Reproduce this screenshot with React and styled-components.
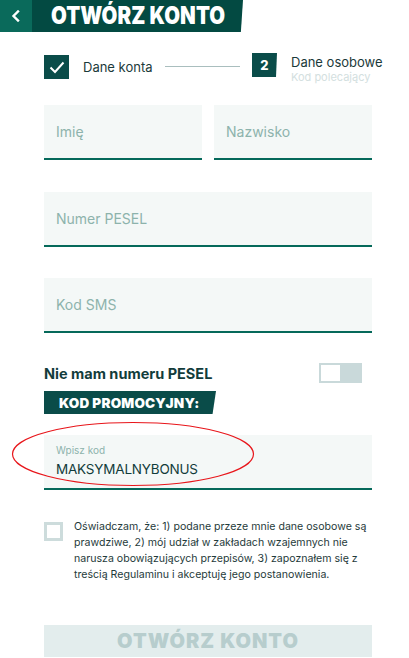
import React from "react";
import styled, { createGlobalStyle } from "styled-components";

const Global = createGlobalStyle`
  html, body { margin: 0; padding: 0; background: #fff; }
  body { font-family: Inter, "Noto Sans", sans-serif; color: #123c3b; }
  * { box-sizing: border-box; }
`;

const Page = styled.div`
  width: 409px;
  height: 658px;
  position: relative;
  overflow: hidden;
`;

const Header = styled.header`
  display: flex;
  height: 32px;
`;

const BackButton = styled.div`
  width: 32px;
  height: 32px;
  background: #0a6a5b;
  display: flex;
  align-items: center;
  justify-content: center;
`;

const TitleBar = styled.h1`
  margin: 0;
  width: 211px;
  height: 32px;
  background: #034a42;
  clip-path: polygon(0 0, 100% 0, 99% 100%, 0 100%);
  display: flex;
  align-items: center;
  padding-left: 19px;
  overflow: hidden;
`;

const TitleText = styled.span`
  color: #fff;
  font-family: Inter, sans-serif;
  font-weight: 900;
  font-size: 24px;
  line-height: 1;
  letter-spacing: 0.1px;
  white-space: nowrap;
  display: inline-block;
  transform: scaleX(0.85);
  transform-origin: left center;
`;

const Content = styled.main`
  padding: 0 37px 0 44px;
`;

const Stepper = styled.div`
  display: flex;
  align-items: flex-start;
  margin-top: 21px;
  height: 52px;
`;

const StepBox = styled.div`
  width: 25px;
  height: 24px;
  background: #0a4c49;
  color: #fff;
  display: flex;
  align-items: center;
  justify-content: center;
  font-weight: 800;
  font-size: 13px;
  flex-shrink: 0;
  margin-top: ${(p) => p.$top || 0}px;
  clip-path: ${(p) => (p.$skew ? "polygon(0 0, 100% 0, 96% 100%, 0 100%)" : "none")};
`;

const StepLabel = styled.div`
  font-size: 13px;
  color: #1b3a3a;
  margin-left: ${(p) => p.$gap}px;
  margin-top: ${(p) => p.$top}px;
  white-space: nowrap;
  line-height: 16px;
  width: ${(p) => (p.$w ? `${p.$w}px` : "auto")};
  flex-shrink: 0;
`;

const StepSub = styled.div`
  font-size: 11px;
  color: #d3e0e0;
  line-height: 13px;
  margin-top: 1px;
`;

const StepLine = styled.div`
  flex: 1;
  height: 1px;
  background: #a9bebe;
  margin: 13px 12px 0 12px;
`;

const FieldRow = styled.div`
  display: grid;
  grid-template-columns: 1fr 1fr;
  gap: 12px;
  margin-bottom: 32px;
`;

const Field = styled.div`
  height: 55px;
  background: #f4f8f7;
  border-bottom: 2px solid #05695a;
  display: flex;
  flex-direction: column;
  justify-content: center;
  padding-left: 12px;
  margin-bottom: ${(p) => p.$mb || 0}px;
`;

const Placeholder = styled.span`
  font-size: 14px;
  color: #8db3ac;
`;

const SmallLabel = styled.span`
  font-size: 10px;
  color: #8db3ac;
  line-height: 12px;
`;

const Value = styled.span`
  font-size: 13.5px;
  color: #123c3b;
  line-height: 20px;
  margin-top: 3px;
  letter-spacing: -0.2px;
`;

const ToggleRow = styled.div`
  display: flex;
  align-items: center;
  justify-content: space-between;
  padding-right: 10px;
  height: 22px;
  margin-top: -2px;
`;

const ToggleLabel = styled.span`
  font-weight: 700;
  font-size: 14.5px;
  color: #123c3b;
`;

const Toggle = styled.div`
  width: 43px;
  height: 20px;
  background: #c9d9da;
  padding: 2px;
  display: flex;
`;

const Knob = styled.div`
  width: 19px;
  height: 16px;
  background: #fff;
`;

const Badge = styled.div`
  width: 172px;
  height: 23px;
  margin-top: 7px;
  background: #0a4c49;
  clip-path: polygon(0 0, 100% 0, 98% 100%, 0 100%);
  color: #fff;
  font-weight: 900;
  font-size: 13.5px;
  letter-spacing: 0.2px;
  display: flex;
  align-items: center;
  padding-left: 15px;
  margin-bottom: 21px;
`;

const Consent = styled.label`
  display: flex;
  gap: 11px;
  margin-top: 31px;
  align-items: flex-start;
`;

const Check = styled.div`
  width: 19px;
  height: 19px;
  border: 3px solid #cddcdc;
  flex-shrink: 0;
  margin-top: 1px;
`;

const ConsentText = styled.p`
  margin: 0;
  font-size: 10.6px;
  line-height: 16px;
  color: #1f3b3b;
  margin-top: -2px;
`;

const Submit = styled.button`
  width: 100%;
  height: 32px;
  margin-top: 42px;
  border: none;
  padding: 0;
  background: #e3eded;
  color: #b7cdcd;
  font-family: Inter, sans-serif;
  font-weight: 900;
  font-size: 20px;
  letter-spacing: 1px;
`;

const Ellipse = styled.svg`
  position: absolute;
  left: 10px;
  top: 420px;
  pointer-events: none;
`;

export default function App() {
  return (
    <Page>
      <Global />
      <Header>
        <BackButton>
          <svg width="12" height="12" viewBox="0 0 12 12">
            <path d="M8 1.5 L3.5 6 L8 10.5" fill="none" stroke="#fff" strokeWidth="2.4" strokeLinecap="square" />
          </svg>
        </BackButton>
        <TitleBar>
          <TitleText>OTWÓRZ KONTO</TitleText>
        </TitleBar>
      </Header>
      <Content>
        <Stepper>
          <StepBox $top={2}>
            <svg width="16" height="13" viewBox="0 0 16 13">
              <path d="M1.5 6.5 L6 11 L14.5 1.5" fill="none" stroke="#fff" strokeWidth="2" />
            </svg>
          </StepBox>
          <StepLabel $gap={14} $top={6}>Dane konta</StepLabel>
          <StepLine />
          <StepBox $skew>2</StepBox>
          <StepLabel $gap={14} $top={1} $w={81}>
            Dane osobowe
            <StepSub>Kod polecający</StepSub>
          </StepLabel>
        </Stepper>
        <FieldRow>
          <Field><Placeholder>Imię</Placeholder></Field>
          <Field><Placeholder>Nazwisko</Placeholder></Field>
        </FieldRow>
        <Field $mb={31}><Placeholder>Numer PESEL</Placeholder></Field>
        <Field $mb={31}><Placeholder>Kod SMS</Placeholder></Field>
        <ToggleRow>
          <ToggleLabel>Nie mam numeru PESEL</ToggleLabel>
          <Toggle><Knob /></Toggle>
        </ToggleRow>
        <Badge>KOD PROMOCYJNY:</Badge>
        <Field>
          <SmallLabel>Wpisz kod</SmallLabel>
          <Value>MAKSYMALNYBONUS</Value>
        </Field>
        <Consent>
          <Check />
          <ConsentText>
            Oświadczam, że: 1) podane przeze mnie dane osobowe są prawdziwe, 2) mój udział w zakładach wzajemnych nie narusza obowiązujących przepisów, 3) zapoznałem się z treścią Regulaminu i akceptuję jego postanowienia.
          </ConsentText>
        </Consent>
        <Submit>OTWÓRZ KONTO</Submit>
      </Content>
      <Ellipse width="246" height="68" viewBox="0 0 246 68">
        <ellipse cx="123" cy="34" rx="120.5" ry="31.5" fill="none" stroke="#e8161b" strokeWidth="1.2" />
      </Ellipse>
    </Page>
  );
}
